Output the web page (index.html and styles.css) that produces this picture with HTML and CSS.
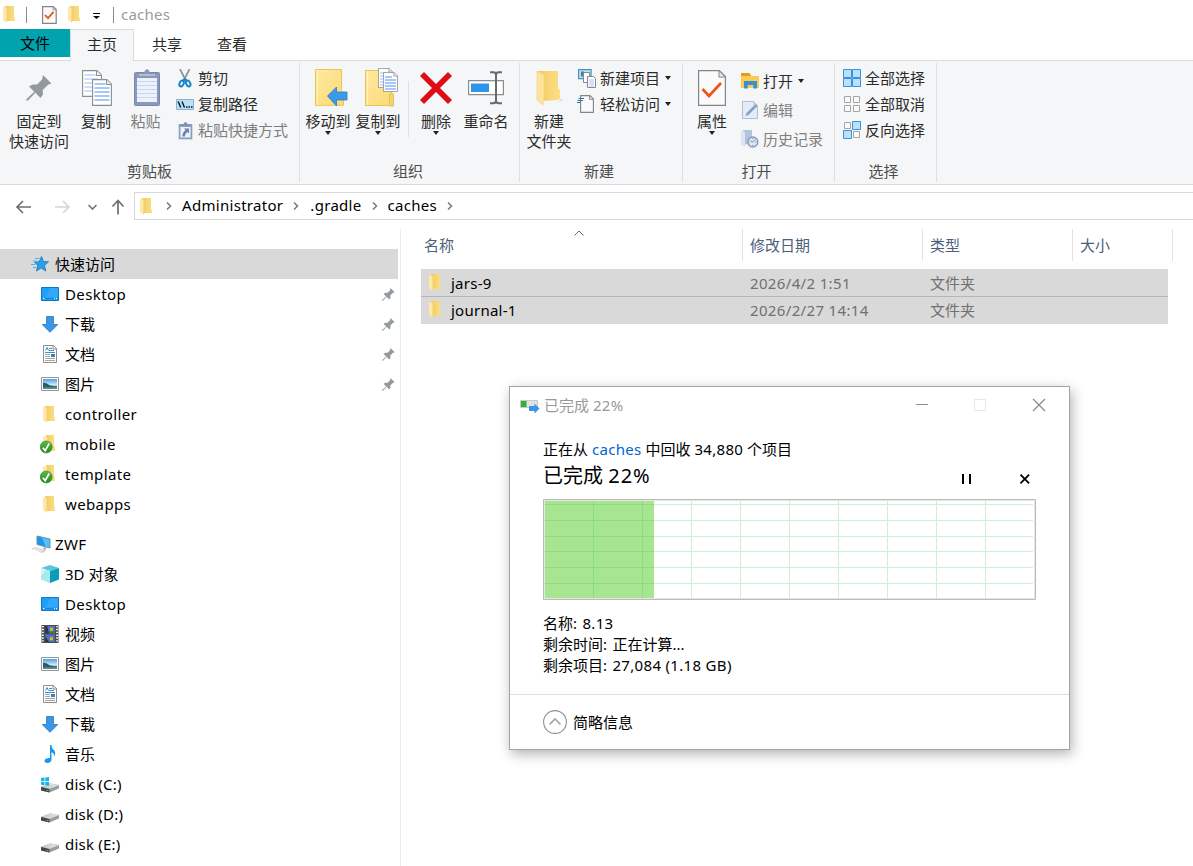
FILE: index.html
```html
<!DOCTYPE html>
<html lang="zh-CN">
<head>
<meta charset="utf-8">
<title>caches</title>
<link rel="stylesheet" href="styles.css">
</head>
<body>
<svg class="defs" width="0" height="0">
  <defs>
    <linearGradient id="gFold" x1="0" x2="1" y1="0" y2="0"><stop offset="0" stop-color="#f0cb65"/><stop offset="1" stop-color="#fddf85"/></linearGradient>
    <linearGradient id="gBig" x1="0" x2="1" y1="0" y2="1"><stop offset="0" stop-color="#ffe9a2"/><stop offset="1" stop-color="#fbd976"/></linearGradient>
    <linearGradient id="gSky" x1="0" x2="0" y1="0" y2="1"><stop offset="0" stop-color="#4f9fe8"/><stop offset=".55" stop-color="#c8e6f5"/><stop offset="1" stop-color="#4d7f94"/></linearGradient>
    <linearGradient id="gGreen" x1="0" x2="0" y1="0" y2="1"><stop offset="0" stop-color="#5fba46"/><stop offset="1" stop-color="#218a17"/></linearGradient>
    <linearGradient id="gDisk" x1="0" x2="1" y1="0" y2="0"><stop offset="0" stop-color="#c4c6c8"/><stop offset="1" stop-color="#e4e5e6"/></linearGradient>
  </defs>
  <symbol id="folder" viewBox="0 0 12 17"><path d="M2 0h9v11l1 1v3H3z" fill="url(#gFold)"/><path d="M0 .5 3.8 2v14.5L.8 15 0 14z" fill="#ffe7a9"/><path d="M3.8 2v14.5" stroke="#f3d27a" stroke-width=".6"/></symbol>
  <symbol id="bigfolder" viewBox="0 0 26 36"><path d="M22 32l4-4v3z" fill="#ddd"/><path d="M1 1h21v17l2 2v9l-3 1-15 1z" fill="url(#gFold)"/><path d="M1 1l7 4v25l-1 5-6-5z" fill="#fde49a" stroke="#f2d17b" stroke-width=".6"/></symbol>
  <symbol id="checkdoc" viewBox="0 0 15 18"><path d="M.6.6h10.600l3 3v13.800H.6z" fill="#fafafa" stroke="#858585" stroke-width="1.2"/><path d="M11 .6v3.200h3.200" fill="none" stroke="#999"/><path d="M3 9l3 3.200 5.600-6.400" fill="none" stroke="#e8561c" stroke-width="1.8"/></symbol>
  <symbol id="pinbig" viewBox="0 0 26 26"><path d="M17 0l8.500 8.500-3.500 1.200-5.300 5.300.3 4.400-2.500 3.500-5.200-5.200-6.800 7.300L.5 26 .4 24.200l7.800-7.400L3 11.400l3.700-2 4.400.2 5-5.100z" fill="#929a9f"/></symbol>
  <symbol id="page" viewBox="0 0 20 27"><path d="M.6.6H15l4.400 4.400v21.400H.6z" fill="#fff" stroke="#8b8e92" stroke-width="1.100"/><path d="M14.500.6v4.900h4.900" fill="#eee" stroke="#8b8e92"/></symbol>
  <symbol id="pages" viewBox="0 0 30 36"><use href="#page" width="20" height="27"/><path d="M2.500 5h11M2.500 9h14M2.500 13h14M2.500 17h14M2.500 21h14" stroke="#9dbdf5"/><use href="#page" x="10" y="9" width="20" height="27"/><path d="M12.500 14h11M12.500 18h15M12.500 22h15M12.500 26h15M12.500 30h15" stroke="#4e8ff5" stroke-width="1.100"/></symbol>
  <symbol id="clipboard" viewBox="0 0 26 37"><rect x=".5" y="3.500" width="25" height="33" rx="1" fill="#8a9ab9" stroke="#7888aa"/><path d="M3 9h20v24H3z" fill="#edf2fc"/><path d="M3 12.500h20M3 16.500h20M3 20.500h20M3 24.500h20M3 28.500h20" stroke="#c9d6eb"/><path d="M4 9V4h6l1-2.500Q13-.8 15 1.500L16 4h6v5z" fill="#8999b5"/><path d="M5 5h16v2H5z" fill="#b2bed1"/></symbol>
  <symbol id="scissors" viewBox="0 0 14 19"><path d="M2 0l6 12M11.500 0L5.500 12" stroke="#8b939a" stroke-width="1.700"/><g fill="none" stroke="#1784ca" stroke-width="2"><ellipse cx="3.600" cy="14.500" rx="2" ry="3" transform="rotate(25 3.600 14.500)"/><ellipse cx="10.200" cy="14.500" rx="2" ry="3" transform="rotate(-25 10.200 14.500)"/><path d="M4.500 12l2.400-2 2.400 2"/></g></symbol>
  <symbol id="path" viewBox="0 0 18 11"><path d="M.5.5h17v10H.5z" fill="#b7e0fa" stroke="#8ab3cf"/><path d="M2.200 2.500l2.500 6M6 2.500l2.500 6" stroke="#111" stroke-width="1.400"/><path d="M10 8h1.500M12.500 8H14M15 8h1.500" stroke="#111" stroke-width="1.500"/></symbol>
  <symbol id="clipshort" viewBox="0 0 15 19"><path d="M.7 3h13.600v15.300H.7z" fill="#8ea0bf"/><path d="M2.500 6h10v10.500h-10z" fill="#edf2fb"/><path d="M3 3h2.500Q7.500-1 9.500 3H12v2H3z" fill="#7e91b2"/><path d="M11 7.500v5L9.300 11q-2 1-2.500 4.500H4.300Q4.500 11 7.500 9.200L6 7.500z" fill="#6d83a8"/></symbol>
  <symbol id="moveto" viewBox="0 0 33 38"><path d="M.5.5h26v21l2 2v12.800H.5z" fill="url(#gBig)" stroke="#e9c652"/><path d="M2.500 1v35" stroke="#fff3c0"/><path d="M12.500 27l9-9v5h10.500v8H21.500v6z" fill="#3b9ae6" stroke="#2a7fca" stroke-width=".8"/></symbol>
  <symbol id="copyto" viewBox="0 0 34 39"><path d="M.5 2.500h26v35H.5z" fill="url(#gBig)" stroke="#e9c652"/><path d="M2.500 3v34" stroke="#fff3c0"/><path d="M24.500 38V26q3-3 4 0v12z" fill="#f6d36d" stroke="#e4c35a"/><use href="#page" x="13" y="0" width="15" height="20"/><path d="M15 5h7M15 8h6M15 11h5M15 14h5M15 17h5" stroke="#a3bbea"/><use href="#page" x="18" y="4" width="15" height="20"/><path d="M20 9h7M20 12h11M20 15h11M20 18h11M20 21h11" stroke="#4e8ff5"/></symbol>
  <symbol id="delete" viewBox="0 0 32 32"><path d="M4 .5l12 12 12-12 3.500 3.500-12 12 12 12-3.500 3.500-12-12-12 12L.5 28l12-12L.5 4z" fill="#e20a13" stroke="#c4000b" stroke-width=".8"/></symbol>
  <symbol id="rename" viewBox="0 0 36 34"><path d="M.6 9.600h34.800v14H.6z" fill="#fff" stroke="#8d8d8d" stroke-width="1.200"/><path d="M3 12.500h18v8.500H3z" fill="#2e96ea"/><path d="M22 1.200h3.500q2.500 0 2.500 3v25q0 3-2.500 3H22M34 1.200h-3.500q-2.500 0-2.500 3v25q0 3 2.500 3H34" fill="none" stroke="#6a6a6a" stroke-width="2"/></symbol>
  <symbol id="newitem" viewBox="0 0 18 19"><path d="M.6.600h12.500v9H.6z" fill="#bfe3f6" stroke="#4d91b8" stroke-width="1.200"/><path d="M3 2.500h3v5H3z" fill="#3e8298"/><path d="M5.500 3.500h6v10h-6z" fill="#fff" stroke="#888"/><path d="M9.500 7.500h6l2 2v9h-8z" fill="#fff" stroke="#888"/><path d="M11 11h5M11 13h5M11 15h5M11 17h5" stroke="#9fc0e8" stroke-width=".9"/></symbol>
  <symbol id="easy" viewBox="0 0 17 18"><path d="M3.600.6H13L16.400 4v13.400H3.600z" fill="#fafafa" stroke="#858585" stroke-width="1.100"/><path d="M12.500.6v3.700h3.900" fill="none" stroke="#888"/><path d="M1.500 3.500H7M.5 5.500h5.500M0 7.500h4" stroke="#2975ab" stroke-width="1.100"/></symbol>
  <symbol id="props" viewBox="0 0 28 36"><path d="M.6.600h20.800l6 6v28.800H.6z" fill="#fafafa" stroke="#858585" stroke-width="1.200"/><path d="M21 .6v6.500h6.400z" fill="#e9eaec" stroke="#858585"/><path d="M4.500 19l6.500 7L23 13" fill="none" stroke="#ef5413" stroke-width="2.700"/></symbol>
  <symbol id="open" viewBox="0 0 18 16"><path d="M0 0h8l2 2v3H0z" fill="#e09e12"/><path d="M0 3h18v12H0z" fill="#fdcb50"/><path d="M3 15.500V8h13v7.500h-3.700V12H6.700v3.500z" fill="#3490db"/></symbol>
  <symbol id="edit" viewBox="0 0 16 18"><path d="M.5.500h11l4 4v13H.5z" fill="#e4ecf8" stroke="#afbfda"/><path d="M12 .5v4h3.500" fill="none" stroke="#afbfda"/><path d="M3.500 15l1-3 9-9 2 2-9 9z" fill="#8ba0c5"/></symbol>
  <symbol id="history" viewBox="0 0 18 18"><path d="M2 0h9v11L4 15z" fill="#b4c3dc"/><path d="M0 0l4 2v15l-4-2z" fill="#dce5f3"/><circle cx="11.800" cy="12" r="5" fill="#dce3ef" stroke="#899dbf" stroke-width="1.500"/><path d="M14.300 9.500L11.800 12l-2-1M11.800 8v1M11.800 15v1M8 12h1M14.500 12h1" fill="none" stroke="#7c90b4"/></symbol>
  <symbol id="selall" viewBox="0 0 18 18"><g fill="#b8e1fc" stroke="#3a91da"><path d="M.5.500h8v8h-8zM9.500.500h8v8h-8zM.5 9.500h8v8h-8zM9.500 9.500h8v8h-8z"/></g></symbol>
  <symbol id="selnone" viewBox="0 0 18 18"><path d="M1.500 1.500h6v6h-6zM10.500 1.500h6v6h-6zM1.500 10.500h6v6h-6zM10.500 10.500h6v6h-6z" fill="#fafafa" stroke="#a5a5a5"/></symbol>
  <symbol id="selinv" viewBox="0 0 18 18"><path d="M1.500 1.500h6v6h-6zM10.500 10.500h6v6h-6z" fill="#fafafa" stroke="#a5a5a5"/><path d="M9.500.500h8v8h-8zM.5 9.500h8v8h-8z" fill="#b8e1fc" stroke="#3a91da"/></symbol>
  <symbol id="star" viewBox="0 0 18 18"><path d="M10.500 1.500l2 5 5 .3-4 3.700 1.300 5.500-4.600-3L5.500 16l1.300-5.700L3.500 7.200l4.700-.5z" fill="#28a0ea" stroke="#1676bd" stroke-width=".8"/><path d="M4 3.500h4.500M2 6h4M0 9.500h4.500M2 12.500h3" stroke="#4cb3ef"/></symbol>
  <symbol id="desktop" viewBox="0 0 18 18"><path d="M.5 2.500h17v13H.5z" fill="#1e9ff8" stroke="#0f77c4"/><path d="M9 3h8v9L4 13z" fill="#45b2fa" opacity=".5"/><path d="M1 13.500h16" stroke="#1681cf"/><path d="M2 13.500h1.500M13 13.500h1M15 13.500h1" stroke="#fff"/></symbol>
  <symbol id="down" viewBox="0 0 18 18"><path d="M5.500 1.500h7v8h4.300L9 17.300 1.200 9.500h4.300z" fill="#3896e5" stroke="#2678be" stroke-width=".8"/></symbol>
  <symbol id="doc" viewBox="0 0 18 18"><path d="M2.500.500h10l3 3v14h-13z" fill="#fff" stroke="#8e8e8e"/><path d="M12 .5V4h3.500" fill="none" stroke="#888"/><path d="M4.500 5.500L6 2.500l1.500 3M8 3.500h3M8 5.500h5M4 7.500h10" fill="none" stroke="#3493cb"/><path d="M4 9.500h5M4 11.500h5M4 13.500h10M4 15.500h10" stroke="#a5a5a5"/><path d="M10 9h4v3h-4z" fill="#417fae"/></symbol>
  <symbol id="pic" viewBox="0 0 18 18"><path d="M.5 2.500h17v13H.5z" fill="#fff" stroke="#969696"/><path d="M2 4h14v10H2z" fill="url(#gSky)"/><path d="M2 7.500l4 1 3 2 3 .5 4 .5v1H2z" fill="#315e59"/></symbol>
  <symbol id="synced" viewBox="0 0 18 19"><path d="M6 0h8v11l1 1v4H7z" fill="url(#gFold)"/><path d="M3 1l4 1v12l-4 0z" fill="#ffe7a9"/><circle cx="6.200" cy="12" r="6" fill="url(#gGreen)" stroke="#2c8425" stroke-width=".6"/><path d="M2.900 12.700l2.300 3 4-7.300" fill="none" stroke="#fff" stroke-width="1.800"/></symbol>
  <symbol id="pc" viewBox="0 0 20 18"><path d="M6 1l13 3v9L6 9.500z" fill="#1d97e9" stroke="#6a8da3" stroke-width=".9"/><path d="M11 2.500l7.500 2v8l-4-1z" fill="#5dbcf8"/><path d="M13 12l2 .5v2.500l-3-1z" fill="#aab0b4"/><path d="M0 13.500l5-1.500 10 3.500-4 2.500z" fill="#c9cccf"/><path d="M2 13.700l8 3M4 12.800l8 3" stroke="#f4f4f4"/></symbol>
  <symbol id="cube" viewBox="0 0 18 18"><path d="M9 0l9 3-9 3L0 3z" fill="#58c7da"/><path d="M0 3l9 3v12l-9-3.500z" fill="#aae8ef"/><path d="M18 3L9 6v12l9-3.500z" fill="#0b9cba"/><path d="M0 3l5 1.700L0 11z" fill="#d4f5f7"/></symbol>
  <symbol id="film" viewBox="0 0 18 19"><path d="M0 0h18v19H0z" fill="#4b4b4b"/><path d="M1.500 1v18M16.500 1v18" stroke="#f3f3f3" stroke-width="2" stroke-dasharray="1.500 1.500"/><path d="M4 1h10v8H4zM4 10h10v8H4z" fill="#4c74c2"/><path d="M9 3h3v3H9zM9 13h3v3H9z" fill="#edb51d"/><path d="M4.500 6h3v2.500h-3z" fill="#d3423a"/><path d="M8 7h6v2H8z" fill="#3c7e32"/><path d="M4 1h2l2 8H4zM4 12l4 6H4z" fill="#27304e"/></symbol>
  <symbol id="music" viewBox="0 0 18 18"><path d="M9 0h1.500q0 3.500 3 5.500 1.600 2.500 0 6-.3-3.500-3-4.500v8q-.5 2.700-4 3-3.200-.2-3-2.500.7-2.800 5.500-2.500z" fill="#1598ed"/></symbol>
  <symbol id="disk" viewBox="0 0 18 18"><path d="M0 11L9 7.500l9 1.500v3.500L8.500 16.500 0 14.500z" fill="#9b9da0"/><path d="M0 11L9 7.500l9 1.500-9.500 4z" fill="url(#gDisk)"/><path d="M0 11l8.500 2v3.500L0 14.500z" fill="#454749"/><path d="M5.500 13.700l2 .5v1l-2-.4z" fill="#46c84a"/></symbol>
  <symbol id="win" viewBox="0 0 18 18"><path d="M0 2l3.500-.5v3.500H0zM4.300 1.400L8 1v4H4.300zM0 5.800h3.500v3.500L0 8.800zM4.300 5.800H8v4l-3.700-.5z" fill="#13b5e9"/></symbol>
  <symbol id="pin" viewBox="0 0 13 13"><use href="#pinbig" width="13" height="13"/></symbol>
  <symbol id="chev" viewBox="0 0 6 8"><path d="M1 .5L4.500 4 1 7.500" fill="none" stroke="#777" stroke-width="1.500"/></symbol>
</svg>

<div class="window">
  <header class="titlebar">
    <svg class="ic-folder"><use href="#folder"/></svg>
    <i class="tsep"></i>
    <svg class="ic-check"><use href="#checkdoc"/></svg>
    <svg class="ic-folder"><use href="#folder"/></svg>
    <svg class="ic-more" viewBox="0 0 7 6"><path d="M0 .5h7" stroke="#000"/><path d="M0 3h7L3.500 6z"/></svg>
    <i class="tsep last"></i>
    <span class="title">caches</span>
  </header>

  <nav class="tabs">
    <span class="tab menu">文件</span><span class="tab active">主页</span><span class="tab share">共享</span><span class="tab view">查看</span>
  </nav>

  <section class="ribbon">
    <div class="group g-clip">
      <div class="tools">
        <div class="big w-pin"><div class="bi"><svg width="26" height="26"><use href="#pinbig"/></svg></div><span>固定到<br>快速访问</span></div>
        <div class="big w-copy"><div class="bi"><svg class="nudge" width="30" height="36"><use href="#pages"/></svg></div><span>复制</span></div>
        <div class="big w-paste off"><div class="bi"><svg class="nudge" width="26" height="37"><use href="#clipboard"/></svg></div><span>粘贴</span></div>
        <div class="list clip">
          <div class="row"><i><svg width="14" height="19"><use href="#scissors"/></svg></i>剪切</div>
          <div class="row"><i><svg width="18" height="11"><use href="#path"/></svg></i>复制路径</div>
          <div class="row off"><i><svg width="15" height="19"><use href="#clipshort"/></svg></i>粘贴快捷方式</div>
        </div>
      </div>
      <div class="caption">剪贴板</div>
    </div>
    <div class="group g-org">
      <div class="tools">
        <div class="big w-50"><div class="bi move"><svg width="33" height="38"><use href="#moveto"/></svg></div><span>移动到</span><b class="tri"></b></div>
        <div class="big w-50"><div class="bi move"><svg width="34" height="39"><use href="#copyto"/></svg></div><span>复制到</span><b class="tri"></b></div>
        <i class="vsep"></i>
        <div class="big w-del"><div class="bi"><svg width="32" height="32"><use href="#delete"/></svg></div><span>删除</span><b class="tri"></b></div>
        <div class="big w-50"><div class="bi"><svg width="36" height="34"><use href="#rename"/></svg></div><span>重命名</span></div>
      </div>
      <div class="caption">组织</div>
    </div>
    <div class="group g-new">
      <div class="tools">
        <div class="big w-new"><div class="bi"><svg width="26" height="36"><use href="#bigfolder"/></svg></div><span>新建<br>文件夹</span></div>
        <div class="list">
          <div class="row"><i><svg width="18" height="19"><use href="#newitem"/></svg></i>新建项目<b class="tri"></b></div>
          <div class="row"><i class="left"><svg width="17" height="18"><use href="#easy"/></svg></i>轻松访问<b class="tri"></b></div>
        </div>
      </div>
      <div class="caption">新建</div>
    </div>
    <div class="group g-open">
      <div class="tools">
        <div class="big w-prop"><div class="bi"><svg width="28" height="36"><use href="#props"/></svg></div><span>属性</span><b class="tri"></b></div>
        <div class="list wide">
          <div class="row"><i><svg width="18" height="16"><use href="#open"/></svg></i>打开<b class="tri"></b></div>
          <div class="row off"><i><svg width="16" height="18"><use href="#edit"/></svg></i>编辑</div>
          <div class="row off"><i><svg width="18" height="18"><use href="#history"/></svg></i>历史记录</div>
        </div>
      </div>
      <div class="caption">打开</div>
    </div>
    <div class="group g-sel">
      <div class="tools">
        <div class="list">
          <div class="row"><i><svg width="18" height="18"><use href="#selall"/></svg></i>全部选择</div>
          <div class="row"><i><svg width="18" height="18"><use href="#selnone"/></svg></i>全部取消</div>
          <div class="row"><i><svg width="18" height="18"><use href="#selinv"/></svg></i>反向选择</div>
        </div>
      </div>
      <div class="caption">选择</div>
    </div>
  </section>

  <div class="navbar">
    <svg class="arrows" viewBox="0 0 134 40" fill="none" stroke-width="1.700"><path d="M31 22H17m6-6l-6 6 6 6" stroke="#6e6e6e"/><path d="M55 22h14m-6-6l6 6-6 6" stroke="#d5d5d5"/><path d="M88.500 20l4 4 4-4" stroke="#777"/><path d="M118 29.500V15.500m-5.500 6l5.500-6 5.500 6" stroke="#6e6e6e"/></svg>
    <div class="address">
      <svg class="ic-folder"><use href="#folder"/></svg>
      <svg class="chev c1"><use href="#chev"/></svg><span class="crumb a">Administrator</span>
      <svg class="chev"><use href="#chev"/></svg><span class="crumb g">.gradle</span>
      <svg class="chev"><use href="#chev"/></svg><span class="crumb c">caches</span>
      <svg class="chev"><use href="#chev"/></svg>
    </div>
  </div>

  <main class="body">
    <aside class="tree">
      <div class="node root sel"><svg><use href="#star"/></svg>快速访问</div>
      <div class="node"><svg><use href="#desktop"/></svg><span class="en">Desktop</span><svg class="pin"><use href="#pin"/></svg></div>
      <div class="node"><svg><use href="#down"/></svg>下载<svg class="pin"><use href="#pin"/></svg></div>
      <div class="node"><svg><use href="#doc"/></svg>文档<svg class="pin"><use href="#pin"/></svg></div>
      <div class="node"><svg><use href="#pic"/></svg>图片<svg class="pin"><use href="#pin"/></svg></div>
      <div class="node"><svg class="f"><use href="#folder"/></svg><span class="en">controller</span></div>
      <div class="node"><svg class="s"><use href="#synced"/></svg><span class="en">mobile</span></div>
      <div class="node"><svg class="s"><use href="#synced"/></svg><span class="en">template</span></div>
      <div class="node"><svg class="f"><use href="#folder"/></svg><span class="en">webapps</span></div>
      <div class="node root pc"><svg><use href="#pc"/></svg><span class="en">ZWF</span></div>
      <div class="node"><svg><use href="#cube"/></svg>3D 对象</div>
      <div class="node"><svg><use href="#desktop"/></svg><span class="en">Desktop</span></div>
      <div class="node"><svg><use href="#film"/></svg>视频</div>
      <div class="node"><svg><use href="#pic"/></svg>图片</div>
      <div class="node"><svg><use href="#doc"/></svg>文档</div>
      <div class="node"><svg><use href="#down"/></svg>下载</div>
      <div class="node"><svg><use href="#music"/></svg>音乐</div>
      <div class="node"><svg class="d"><use href="#disk"/><use href="#win"/></svg><span class="en disk">disk (C:)</span></div>
      <div class="node"><svg class="d"><use href="#disk"/></svg><span class="en disk">disk (D:)</span></div>
      <div class="node"><svg class="d"><use href="#disk"/></svg><span class="en disk">disk (E:)</span></div>
    </aside>
    <section class="files">
      <div class="head">
        <div class="h name">名称<svg class="sort" viewBox="0 0 10 6"><path d="M.5 5.500L5 1l4.500 4.500" fill="none" stroke="#666"/></svg></div>
        <div class="h date">修改日期</div><div class="h type">类型</div><div class="h size">大小</div>
      </div>
      <div class="file"><svg class="ic-folder"><use href="#folder"/></svg><span class="n">jars-9</span><span class="t">2026/4/2 1:51</span><span>文件夹</span></div>
      <div class="file second"><svg class="ic-folder"><use href="#folder"/></svg><span class="n">journal-1</span><span class="t">2026/2/27 14:14</span><span>文件夹</span></div>
    </section>
  </main>

  <div class="dialog">
    <div class="dtitle">
      <svg class="prog" width="20" height="14" viewBox="0 0 20 14"><path d="M.5.500h17v7H.5z" fill="#e2e2e2" stroke="#c9c9c9"/><path d="M1 1h5.500v6H1z" fill="#2eb135"/><path d="M9 6h5.500V3.500L19.500 8.500l-5 5V11H9z" fill="#3896e5"/></svg>
      <span>已完成 <em>22%</em></span>
      <svg class="ctl" width="130" height="14" viewBox="0 0 130 14" fill="none"><path d="M0 6.500h12" stroke="#8d8d8d"/><path d="M58.500 1.500h11v11h-11z" stroke="#e7e7e7"/><path d="M117 1l12 12M129 1l-12 12" stroke="#8a8a8a" stroke-width="1.200"/></svg>
    </div>
    <div class="dbody">
      <div class="from">正在从 <a>caches</a> 中回收 <em>34,880</em> 个项目</div>
      <div class="done"><span>已完成 <em>22%</em></span><svg width="68" height="10" viewBox="0 0 68 10"><path d="M1 0v10M8 0v10" stroke="#000" stroke-width="2"/><path d="M58.500.700l8.600 8.600M67.100.700l-8.600 8.600" stroke="#000" stroke-width="1.800"/></svg></div>
      <svg class="chart" width="493" height="101" viewBox="0 0 493 101">
        <path d="M.5.500h492v100H.5z" fill="#fff" stroke="#bababa"/><path d="M1.500 1.500h490v98h-490z" fill="none" stroke="#e6e6e6"/>
        <path d="M2 2h109v97H2z" fill="#a8e590"/>
        <g class="grid"><path d="M148.500 2v97M197.500 2v97M246.500 2v97M295.500 2v97M344.500 2v97M393.500 2v97M442.500 2v97M111 5.500h379M111 21.500h379M111 37.500h379M111 52.500h379M111 68.500h379M111 84.500h379"/></g>
        <g class="grid in"><path d="M50.500 2v97M99.500 2v97M2 5.500h109M2 21.500h109M2 37.500h109M2 52.500h109M2 68.500h109M2 84.500h109"/></g>
      </svg>
      <div class="info"><div>名称<s>:</s> <em>8.13</em></div><div>剩余时间<s>:</s> 正在计算...</div><div>剩余项目<s>:</s> <em>27,084 (1.18 GB)</em></div></div>
    </div>
    <div class="dfoot"><svg width="24" height="24" viewBox="0 0 24 24" fill="none"><circle cx="12" cy="12" r="11.400" stroke="#8f8f8f" stroke-width="1.100"/><path d="M6.500 14.500L12 9l5.500 5.500" stroke="#a4a4a4" stroke-width="1.700"/></svg><span>简略信息</span></div>
  </div>
</div>
</body>
</html>
```
FILE: styles.css
```css
* { box-sizing: border-box; }
body { margin: 0; background: #fff; color: #000; font: 15px/20px "Noto Sans", "Noto Sans CJK SC", sans-serif; }
svg { display: block; flex: none; }
i, em { font-style: normal; }
s { text-decoration: none; letter-spacing: 1.5px; }
.defs { position: absolute; }
.window { position: relative; width: 1193px; height: 866px; overflow: hidden; white-space: nowrap; }
.ic-folder { width: 12px; height: 17px; }
.en { letter-spacing: .38px; }
.en.disk { letter-spacing: .22px; }

.titlebar { display: flex; align-items: center; height: 29px; padding-left: 3px; }
.tsep { width: 1px; height: 16px; margin: 0 15px 0 11px; background: #8e8e8e; }
.ic-check { width: 15px; height: 18px; margin-right: 11px; }
.ic-more { width: 7px; height: 6px; margin: 3px 0 0 13px; }
.tsep.last { margin: 0 7px 0 13px; }
.title { margin-top: -2px; color: #9b9b9b; letter-spacing: .25px; }

.tabs { display: flex; height: 32px; border-bottom: 1px solid #dadbdc; color: #2b2b2b; }
.tab { line-height: 30px; text-align: center; }
.tab.menu { width: 70px; height: 28px; background: #00a3ae; color: #000; line-height: 29px; }
.tab.active { width: 64px; height: 32px; border: 1px solid #dadbdc; border-bottom: 0; background: #f5f6f7; line-height: 29px; }
.tab.share { width: 66px; }
.tab.view { width: 64px; }

.ribbon { display: flex; height: 124px; padding-top: 2px; background: #f5f6f7; border-bottom: 1px solid #dadbdc; color: #2b2b2b; }
.group { display: flex; flex-direction: column; height: 119px; border-right: 1px solid #dfe0e1; }
.tools { display: flex; height: 98px; }
.caption { text-align: center; color: #4d4d4d; }
.g-clip { width: 300px; }
.g-org { width: 220px; padding-left: 3px; }
.g-org .caption { margin-left: -6px; }
.g-new { width: 163px; }
.g-open { width: 152px; }
.g-sel { width: 102px; padding-left: 8px; }
.g-sel .caption { margin-left: -12px; }
.g-open .caption { margin-left: -4px; }
.g-new .caption { margin-left: -4px; }
.big { display: flex; flex-direction: column; align-items: center; text-align: center; }
.bi { display: flex; align-items: center; justify-content: center; height: 48px; padding-top: 1px; }
.bi.move { padding-left: 7px; }
.bi .nudge { margin-left: 2px; }
.tri { width: 0; height: 0; border: 3.500px solid transparent; border-top: 4px solid #222; border-bottom: 0; }
.w-pin { width: 78px; }
.w-copy { width: 36px; }
.w-paste { width: 63px; }
.w-50 { width: 50px; }
.vsep { width: 1px; height: 56px; margin: 18px 2px 0 5px; background: #dfe0e1; }
.w-del { width: 50px; }
.w-new { width: 58px; }
.w-prop { width: 58px; }
.off { color: #7e7e7e; }
.list { padding-top: 2px; }
.clip { margin-left: -1px; }
.row { display: flex; align-items: center; height: 26px; }
.row i { display: flex; justify-content: center; width: 18px; margin-right: 4px; }
.row i.left { justify-content: flex-start; margin-left: -1px; width: 19px; }
.row .tri { margin-left: 5px; }
.wide { padding-top: 3px; }
.wide .row { height: 29px; }

.navbar { display: flex; height: 42px; }
.arrows { width: 134px; height: 40px; }
.address { display: flex; align-items: center; flex: 1; height: 28px; margin-top: 7px; padding-left: 5px; border: 1px solid #d9d9d9; border-right: 0; }
.chev { width: 6px; height: 8px; }
.c1 { margin-left: 14px; }
.crumb { margin: -2px 10px 0; letter-spacing: .3px; }
.crumb.g { margin-left: 11px; }

.body { display: flex; height: 639px; padding-top: 2px; }
.tree { width: 401px; border-right: 1px solid #ececec; padding-top: 20px; }
.node { display: flex; align-items: center; height: 30px; padding-left: 41px; width: 398px; }
.node svg { width: 18px; height: 18px; margin-right: 6px; }
.node.root { padding-left: 31px; }
.node.sel { background: #d9d9d9; }
.node.pc { margin-top: 10px; }
.node.pc svg { width: 20px; margin-right: 4px; }
.node .pin { width: 13px; height: 13px; margin: 0 3px 0 auto; }
.node .f { width: 12px; height: 17px; margin: 0 10px 0 2px; }
.node .s { height: 19px; margin-left: -1px; margin-right: 7px; }
.node .d { height: 18px; margin-top: 1px; }
.files { flex: 1; padding-left: 20px; }
.head { display: flex; height: 32px; color: #4c607a; margin-bottom: 8px; }
.h { position: relative; height: 32px; line-height: 32px; padding-left: 7px; border-right: 1px solid #e3e3e3; }
.h.name { width: 322px; padding-left: 3px; }
.h.date { width: 180px; }
.h.type { width: 150px; }
.h.size { width: 100px; }
.sort { position: absolute; left: 153px; top: 1px; width: 10px; height: 6px; }
.file { display: flex; align-items: center; width: 747px; height: 27px; padding-left: 8px; background: #d9d9d9; color: #707070; }
.file.second { height: 28px; border-top: 1px solid #b6b6b6; padding-bottom: 2px; }
.file .n { width: 299px; margin-left: 10px; color: #000; letter-spacing: .25px; }
.file .t { width: 180px; letter-spacing: .35px; }

.dialog { position: absolute; left: 509px; top: 386px; width: 561px; height: 364px; border: 1px solid #a3a3a3; background: #fff; box-shadow: 2px 4px 12px rgba(0,0,0,.3); }
.dtitle { display: flex; align-items: center; height: 36px; padding: 0 23px 0 10px; color: #999; }
.dtitle span { margin-left: 4px; }
.prog { margin-top: 4px; }
.ctl { margin-left: auto; }
.dbody { padding: 16px 33px 0; height: 271px; }
.dialog em, .from a { letter-spacing: .32px; }
.from a { color: #0066cc; }
.done { display: flex; align-items: center; justify-content: space-between; height: 28px; margin-top: 3px; font-size: 20px; }
.dialog .done em { letter-spacing: 1px; }
.done svg { margin: 6px 6px 0 0; }
.chart { margin-top: 9px; }
.grid { fill: none; stroke: #cdefd2; }
.grid.in { stroke: #8bdc84; }
.info { margin-top: 13px; line-height: 21px; }
.dfoot { display: flex; align-items: center; height: 55px; border-top: 1px solid #dfdfdf; padding-left: 33px; }
.dfoot span { margin-left: 6px; }
```
